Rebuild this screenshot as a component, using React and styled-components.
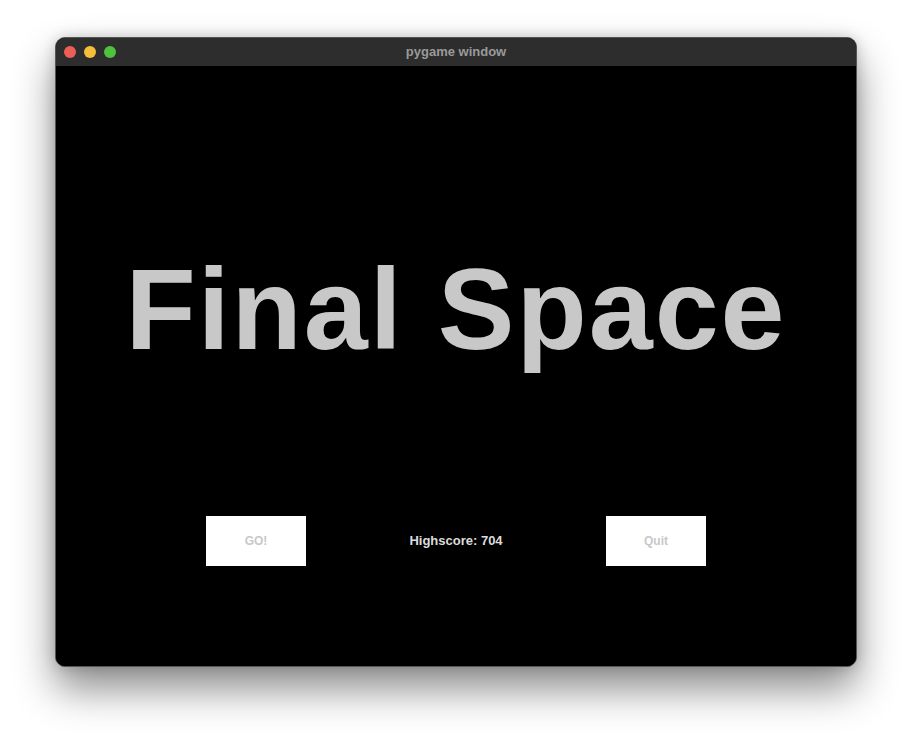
import styled, { createGlobalStyle } from "styled-components";

const GlobalStyle = createGlobalStyle`
  html, body {
    margin: 0;
    padding: 0;
    background: #ffffff;
  }
  body {
    width: 912px;
    height: 740px;
    overflow: hidden;
    font-family: "Liberation Sans", Arial, sans-serif;
  }
`;

const Desktop = styled.div`
  width: 912px;
  height: 740px;
  padding: 37px 0 0 55px;
  box-sizing: border-box;
`;

const Window = styled.div`
  width: 802px;
  display: flex;
  flex-direction: column;
  border-radius: 10px;
  overflow: hidden;
  border: 1px solid #555555;
  box-sizing: border-box;
  background: #000;
  box-shadow: 0 22px 40px rgba(0, 0, 0, 0.45), 0 0 14px rgba(0, 0, 0, 0.18);
`;

const TitleBar = styled.div`
  height: 28px;
  background: #2d2d2d;
  display: grid;
  grid-template-columns: 1fr auto 1fr;
  align-items: center;
  padding: 0 8px;
`;

const Lights = styled.div`
  display: flex;
  gap: 8px;
`;

const Light = styled.span`
  width: 12px;
  height: 12px;
  border-radius: 50%;
  background: ${(p) => p.$color};
`;

const WindowTitle = styled.div`
  color: #9a9a9a;
  font-size: 13px;
  font-weight: bold;
  margin-top: -1px;
`;

const Screen = styled.div`
  height: 600px;
  background: #000;
  display: flex;
  flex-direction: column;
  align-items: center;
`;

const Logo = styled.h1`
  margin: 178px 0 0;
  height: 130px;
  font-size: 115px;
  line-height: 130px;
  font-weight: bold;
  letter-spacing: 2px;
  color: #c8c8c8;
  white-space: nowrap;
`;

const Controls = styled.div`
  margin-top: 142px;
  width: 500px;
  display: flex;
  justify-content: space-between;
  align-items: center;
`;

const Button = styled.div`
  width: 100px;
  height: 50px;
  background: #ffffff;
  color: #c8c8c8;
  display: flex;
  align-items: center;
  justify-content: center;
  font-size: 12px;
  font-weight: bold;
`;

const Score = styled.div`
  color: #dcdcdc;
  font-size: 13px;
  font-weight: bold;
  margin-top: -2px;
`;

export default function App() {
  return (
    <>
      <GlobalStyle />
      <Desktop>
        <Window>
          <TitleBar>
            <Lights>
              <Light $color="#ed5f56" />
              <Light $color="#f5be3b" />
              <Light $color="#4fc13e" />
            </Lights>
            <WindowTitle>pygame window</WindowTitle>
            <span />
          </TitleBar>
          <Screen>
            <Logo>Final Space</Logo>
            <Controls>
              <Button>GO!</Button>
              <Score>Highscore: 704</Score>
              <Button>Quit</Button>
            </Controls>
          </Screen>
        </Window>
      </Desktop>
    </>
  );
}
